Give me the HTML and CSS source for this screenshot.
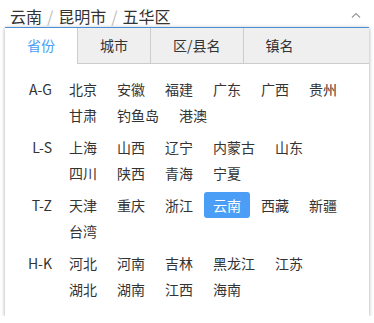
FILE: index.html
```html
<!DOCTYPE html>
<html lang="zh-CN">
<head>
    <meta charset="UTF-8">
    <meta name="viewport" content="width=device-width, initial-scale=1.0">
    <title>地区选择</title>
    <link rel="stylesheet" href="styles.css">
</head>
<body>

    <div class="picker">
        <div class="picker-head">
            <span class="picked">云南<span class="sep">/</span>昆明市<span class="sep">/</span>五华区</span>
            <svg class="arrow" width="10" height="6" viewBox="0 0 10 6">
                <polyline points="1,5.5 5,1.5 9,5.5" fill="none" stroke="#999" stroke-width="1.2"/>
            </svg>
        </div>

        <div class="panel">
            <div class="tabs">
                <div class="tab active">省份</div>
                <div class="tab">城市</div>
                <div class="tab">区/县名</div>
                <div class="tab last">镇名</div>
            </div>

            <div class="panel-body">
                <div class="group">
                    <div class="group-label">A-G</div>
                    <div class="group-items">
                        <span class="item">北京</span>
                        <span class="item">安徽</span>
                        <span class="item">福建</span>
                        <span class="item">广东</span>
                        <span class="item">广西</span>
                        <span class="item">贵州</span>
                        <span class="item">甘肃</span>
                        <span class="item">钓鱼岛</span>
                        <span class="item">港澳</span>
                    </div>
                </div>
                <div class="group">
                    <div class="group-label">L-S</div>
                    <div class="group-items">
                        <span class="item">上海</span>
                        <span class="item">山西</span>
                        <span class="item">辽宁</span>
                        <span class="item">内蒙古</span>
                        <span class="item">山东</span>
                        <span class="item">四川</span>
                        <span class="item">陕西</span>
                        <span class="item">青海</span>
                        <span class="item">宁夏</span>
                    </div>
                </div>
                <div class="group">
                    <div class="group-label">T-Z</div>
                    <div class="group-items">
                        <span class="item">天津</span>
                        <span class="item">重庆</span>
                        <span class="item">浙江</span>
                        <span class="item selected">云南</span>
                        <span class="item">西藏</span>
                        <span class="item">新疆</span>
                        <span class="item">台湾</span>
                    </div>
                </div>
                <div class="group">
                    <div class="group-label">H-K</div>
                    <div class="group-items">
                        <span class="item">河北</span>
                        <span class="item">河南</span>
                        <span class="item">吉林</span>
                        <span class="item">黑龙江</span>
                        <span class="item">江苏</span>
                        <span class="item">湖北</span>
                        <span class="item">湖南</span>
                        <span class="item">江西</span>
                        <span class="item">海南</span>
                    </div>
                </div>
            </div>
        </div>
    </div>

</body>
</html>
```

FILE: styles.css
```css
body {
    margin: 0;
    background: white;
    color: #333;
    font-family: "Noto Sans CJK SC", "Noto Sans", sans-serif;
}
.picker {
    width: 364px;
    padding: 0 5px;
}
.picker-head {
    height: 27px;
    display: flex;
    align-items: center;
    justify-content: space-between;
    padding: 0 8px 0 5px;
    font-size: 16px;
    line-height: 20px;
}
.picked {
    position: relative;
    top: 2px;
}
.sep {
    color: #bbb;
    margin: 0 5px;
}
.arrow {
    display: block;
    margin-top: 3px;
}
.panel {
    background: white;
    border-top: 1px solid #4a90d9;
    box-shadow: 0 1px 4px rgba(0, 0, 0, 0.35);
}
.tabs {
    display: flex;
    height: 35px;
    background: #efefef;
    border-bottom: 1px solid #ccc;
}
.tab {
    padding: 0 22px;
    line-height: 35px;
    font-size: 14px;
    color: #333;
    border-right: 1px solid #ccc;
}
.tab.active {
    background: white;
    color: #4a9ef6;
    height: 36px;
}
.tab.last {
    flex: 1;
    border-right: none;
}
.panel-body {
    padding: 12px 0 14px;
}
.group {
    display: flex;
    margin-bottom: 6px;
}
.group:last-child {
    margin-bottom: 0;
}
.group-label {
    width: 47px;
    margin-right: 8px;
    text-align: right;
    font-size: 14px;
    line-height: 26px;
}
.group-items {
    flex: 1;
    display: flex;
    flex-wrap: wrap;
    padding-right: 10px;
}
.item {
    height: 26px;
    line-height: 26px;
    padding: 0 9px;
    margin-right: 2px;
    font-size: 14px;
    border-radius: 3px;
}
.item.selected {
    background: #4a9ef6;
    color: white;
}
```
